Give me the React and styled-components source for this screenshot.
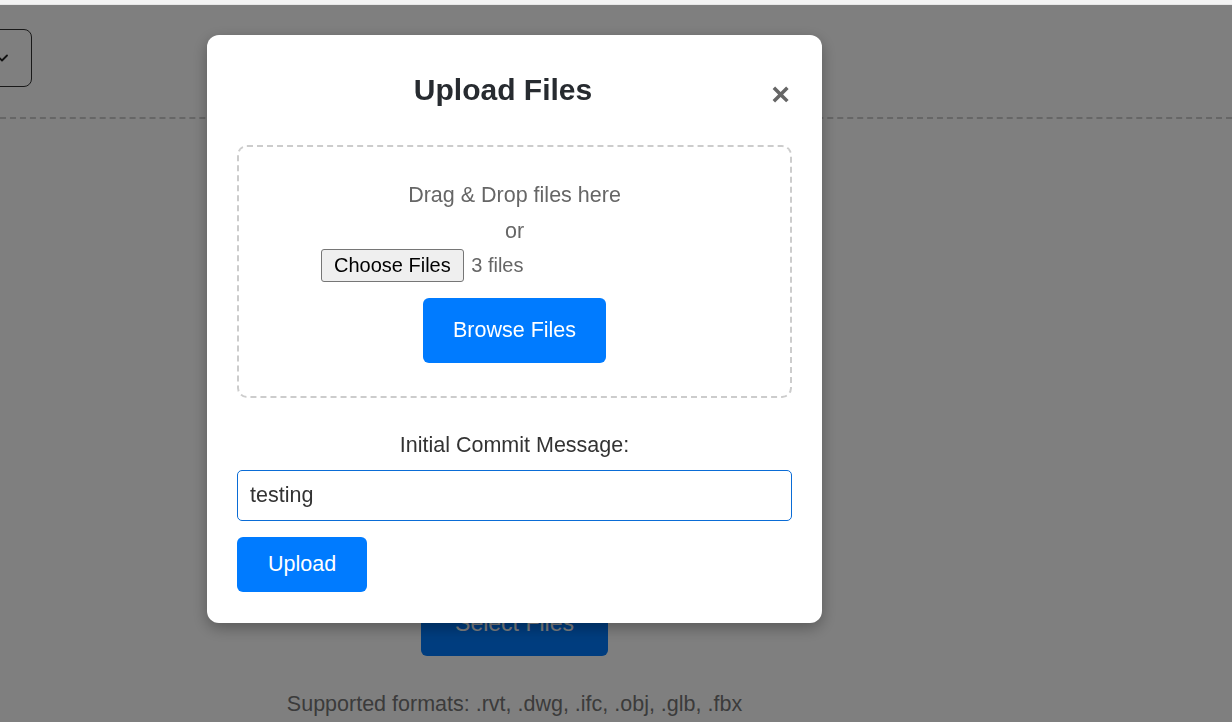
import React from "react";
import styled, { createGlobalStyle } from "styled-components";

const GlobalStyle = createGlobalStyle`
  html, body {
    margin: 0;
    padding: 0;
    background: #ffffff;
    overflow: hidden;
    font-family: "Liberation Sans", Arial, sans-serif;
  }
  * { box-sizing: border-box; }
`;

// page behind the modal
const TopStrip = styled.div`
  height: 5px;
  background: #f3f3f3;
  border-bottom: 1px solid #e6e6e6;
`;

const Page = styled.div`
  width: 1232px;
  height: 717px;
  background: #ffffff;
`;

const Toolbar = styled.div`
  display: flex;
  padding-top: 24px;
  height: 112px;
`;

const MenuButton = styled.button`
  width: 60px;
  height: 58px;
  margin-left: -28px;
  border: 1.5px solid #333;
  border-radius: 8px;
  background: #fff;
  display: flex;
  align-items: center;
  justify-content: center;
  padding: 0;
`;

const DropArea = styled.section`
  border-top: 2px dashed #ccc;
  padding: 472px 203px 0 0;
  display: flex;
  flex-direction: column;
  align-items: center;
`;

const SelectButton = styled.button`
  background: #007bff;
  color: #fff;
  border: none;
  border-radius: 6px;
  font-family: inherit;
  font-size: 23px;
  padding: 19px 34px;
`;

const Formats = styled.p`
  margin: 36px 0 0;
  font-size: 21.5px;
  color: #777;
`;

// modal
const Overlay = styled.div`
  position: fixed;
  top: 5px;
  left: 0;
  right: 0;
  bottom: 0;
  background: rgba(0, 0, 0, 0.5);
  display: flex;
  justify-content: center;
  align-items: flex-start;
  padding: 30px 203px 0 0;
`;

const Modal = styled.div`
  width: 615px;
  background: #fff;
  border-radius: 12px;
  padding: 30px 30px 31px;
  box-shadow: 0 5px 15px rgba(0, 0, 0, 0.3);
  font-size: 21.5px;
`;

const Header = styled.div`
  display: flex;
  align-items: center;
  height: 50px;
  margin-bottom: 30px;
`;

const Title = styled.h2`
  flex: 1;
  margin: 0;
  text-align: center;
  font-size: 30px;
  font-weight: 700;
  color: #272b30;
`;

const CloseButton = styled.button`
  width: 23px;
  border: none;
  background: none;
  padding: 0;
  margin-top: 8px;
  font-family: inherit;
  font-size: 32px;
  font-weight: 700;
  line-height: 1;
  color: #666;
`;

const DropZone = styled.div`
  border: 2px dashed #ccc;
  border-radius: 10px;
  padding: 36px 20px 33px;
  display: flex;
  flex-direction: column;
  align-items: center;
`;

const Hint = styled.p`
  margin: 0 0 ${(p) => p.$gap}px;
  color: #666;
  font-size: 21.5px;
`;

const FileRow = styled.div`
  width: 388px;
  display: flex;
  align-items: center;
  gap: 7px;
  margin-bottom: 16px;
`;

const ChooseButton = styled.span`
  height: 33px;
  padding: 0 12.5px;
  display: inline-flex;
  align-items: center;
  background: #efefef;
  border: 1px solid #767676;
  border-radius: 3px;
  font-size: 20px;
  color: #000;
`;

const FileCount = styled.span`
  font-size: 20px;
  color: #666;
`;

const PrimaryButton = styled.button`
  background: #007bff;
  color: #fff;
  border: none;
  border-radius: 6px;
  font-family: inherit;
  font-size: 21.5px;
  padding: ${(p) => (p.$large ? "20px 30px" : "15px 31px")};
  align-self: ${(p) => (p.$large ? "center" : "flex-start")};
`;

const Form = styled.div`
  display: flex;
  flex-direction: column;
  margin-top: 35px;
`;

const Label = styled.label`
  text-align: center;
  color: #333;
  margin-bottom: 12px;
`;

const MessageInput = styled.input`
  height: 51px;
  padding: 0 12px;
  border: 1px solid #0a6cd6;
  border-radius: 5px;
  font-family: inherit;
  font-size: 21.5px;
  color: #333;
  margin-bottom: 16px;
  outline: none;
`;

function Chevron() {
  return (
    <svg width="12" height="8" viewBox="0 0 12 8" fill="none">
      <path d="M1 1.5 L6 6.5 L11 1.5" stroke="#222" strokeWidth="1.8" strokeLinecap="round" strokeLinejoin="round" />
    </svg>
  );
}

export default function App() {
  return (
    <>
      <GlobalStyle />
      <TopStrip />
      <Page>
        <Toolbar>
          <MenuButton aria-label="menu">
            <Chevron />
          </MenuButton>
        </Toolbar>
        <DropArea>
          <SelectButton>Select Files</SelectButton>
          <Formats>Supported formats: .rvt, .dwg, .ifc, .obj, .glb, .fbx</Formats>
        </DropArea>
      </Page>

      <Overlay>
        <Modal>
          <Header>
            <Title>Upload Files</Title>
            <CloseButton aria-label="close">×</CloseButton>
          </Header>
          <DropZone>
            <Hint $gap={11}>Drag &amp; Drop files here</Hint>
            <Hint $gap={5}>or</Hint>
            <FileRow>
              <ChooseButton>Choose Files</ChooseButton>
              <FileCount>3 files</FileCount>
            </FileRow>
            <PrimaryButton $large>Browse Files</PrimaryButton>
          </DropZone>
          <Form>
            <Label>Initial Commit Message:</Label>
            <MessageInput defaultValue="testing" />
            <PrimaryButton>Upload</PrimaryButton>
          </Form>
        </Modal>
      </Overlay>
    </>
  );
}
